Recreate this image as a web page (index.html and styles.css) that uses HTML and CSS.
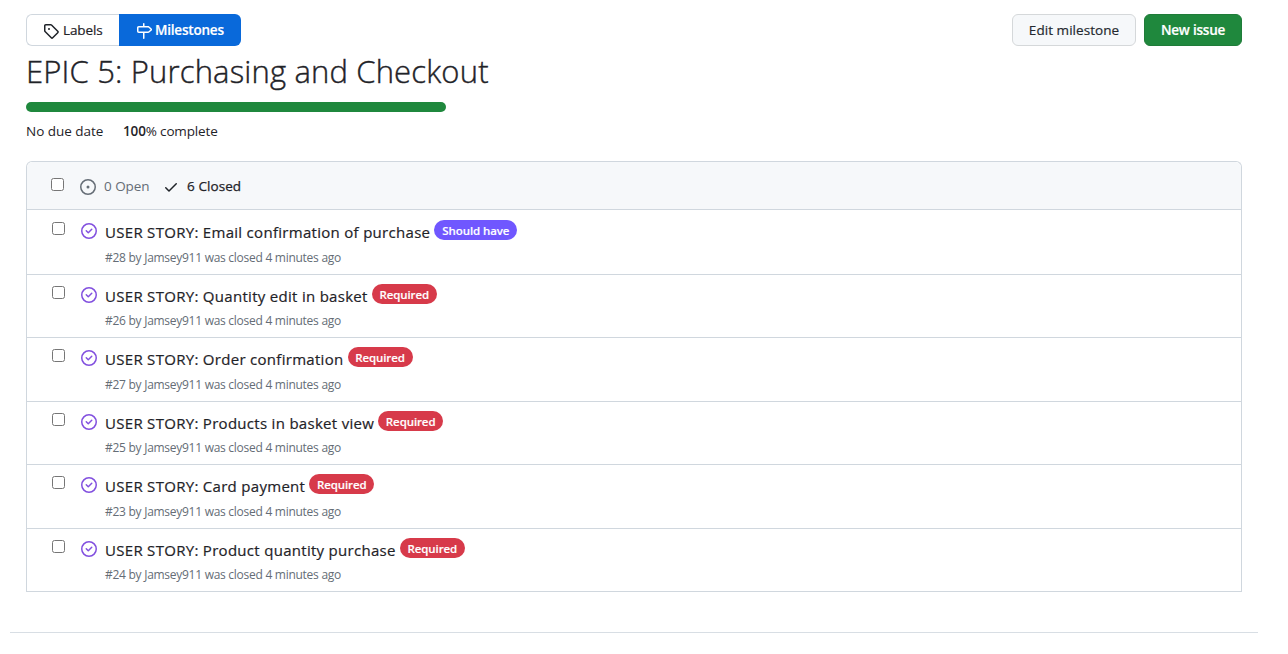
FILE: index.html
```html
<!DOCTYPE html>
<html lang="en">
<head>
<meta charset="utf-8">
<title>EPIC 5: Purchasing and Checkout</title>
<link rel="stylesheet" href="styles.css">
</head>
<body>
<svg class="sprite" width="0" height="0" aria-hidden="true">
  <symbol id="closed" viewBox="0 0 16 16"><path d="M11.28 6.78a.75.75 0 0 0-1.06-1.06L7.25 8.69 5.78 7.22a.75.75 0 0 0-1.06 1.06l2 2a.75.75 0 0 0 1.06 0l3.5-3.5Z"/><path d="M16 8A8 8 0 1 1 0 8a8 8 0 0 1 16 0Zm-1.5 0a6.5 6.5 0 1 0-13 0 6.5 6.5 0 0 0 13 0Z"/></symbol>
</svg>
<main class="page">
  <header class="toolbar">
    <nav class="tabs">
      <a class="tab tab-labels"><svg class="icon" viewBox="0 0 16 16"><path d="M1 7.775V2.75C1 1.784 1.784 1 2.75 1h5.025c.464 0 .91.184 1.238.513l6.25 6.25a1.75 1.75 0 0 1 0 2.474l-5.026 5.026a1.75 1.75 0 0 1-2.474 0l-6.25-6.25A1.752 1.752 0 0 1 1 7.775Zm1.5 0c0 .066.026.13.073.177l6.25 6.25a.25.25 0 0 0 .354 0l5.025-5.025a.25.25 0 0 0 0-.354l-6.25-6.25a.25.25 0 0 0-.177-.073H2.75a.25.25 0 0 0-.25.25ZM6 5a1 1 0 1 1 0 2 1 1 0 0 1 0-2Z"/></svg><span>Labels</span></a>
      <a class="tab tab-milestones"><svg class="icon" viewBox="0 0 16 16"><path d="M7.75 0a.75.75 0 0 1 .75.75V3h3.634c.414 0 .814.147 1.13.414l2.07 1.75a1.75 1.75 0 0 1 0 2.672l-2.07 1.75a1.75 1.75 0 0 1-1.13.414H8.5v5.25a.75.75 0 0 1-1.5 0V10H2.75A1.75 1.75 0 0 1 1 8.25v-3.5C1 3.784 1.784 3 2.75 3H7V.75A.75.75 0 0 1 7.75 0Zm4.384 8.5a.25.25 0 0 0 .161-.06l2.07-1.75a.248.248 0 0 0 0-.38l-2.07-1.75a.25.25 0 0 0-.161-.06H2.75a.25.25 0 0 0-.25.25v3.5c0 .138.112.25.25.25h9.384Z"/></svg><span>Milestones</span></a>
    </nav>
    <div class="actions">
      <button class="btn btn-edit">Edit milestone</button>
      <button class="btn btn-new">New issue</button>
    </div>
  </header>
  <h1 class="title"><span>EPIC 5: Purchasing and Checkout</span></h1>
  <div class="progress"></div>
  <div class="stats"><span class="due">No due date</span><span class="complete"><b>100</b>% complete</span></div>
  <section class="issues">
    <div class="issues-head">
      <input type="checkbox" class="check">
      <svg class="icon head-open-icon" viewBox="0 0 16 16"><path d="M8 9.500a1.500 1.500 0 1 0 0-3 1.500 1.500 0 0 0 0 3Z"/><path d="M8 0a8 8 0 1 1 0 16A8 8 0 0 1 8 0ZM1.500 8a6.500 6.500 0 1 0 13 0 6.500 6.500 0 0 0-13 0Z"/></svg>
      <span class="open">0 Open</span>
      <svg class="icon head-check-icon" viewBox="0 0 16 16"><path d="M13.780 4.220a.75.75 0 0 1 0 1.060l-7.250 7.250a.75.75 0 0 1-1.060 0L2.220 9.280a.751.751 0 0 1 .018-1.042.751.751 0 0 1 1.042-.018L6 10.940l6.720-6.720a.75.75 0 0 1 1.060 0Z"/></svg>
      <span class="closed">6 Closed</span>
    </div>
    <article class="issue issue-first"><input type="checkbox" class="check"><svg class="icon issue-icon"><use href="#closed"/></svg><div class="issue-text"><div class="issue-line"><a class="name">USER STORY: Email confirmation of purchase</a><span class="label should">Should have</span></div><div class="meta">#28 by Jamsey911 was closed 4 minutes ago</div></div></article>
    <article class="issue short"><input type="checkbox" class="check"><svg class="icon issue-icon"><use href="#closed"/></svg><div class="issue-text"><div class="issue-line"><a class="name">USER STORY: Quantity edit in basket</a><span class="label required">Required</span></div><div class="meta">#26 by Jamsey911 was closed 4 minutes ago</div></div></article>
    <article class="issue"><input type="checkbox" class="check"><svg class="icon issue-icon"><use href="#closed"/></svg><div class="issue-text"><div class="issue-line"><a class="name">USER STORY: Order confirmation</a><span class="label required">Required</span></div><div class="meta">#27 by Jamsey911 was closed 4 minutes ago</div></div></article>
    <article class="issue short"><input type="checkbox" class="check"><svg class="icon issue-icon"><use href="#closed"/></svg><div class="issue-text"><div class="issue-line"><a class="name">USER STORY: Products in basket view</a><span class="label required">Required</span></div><div class="meta">#25 by Jamsey911 was closed 4 minutes ago</div></div></article>
    <article class="issue"><input type="checkbox" class="check"><svg class="icon issue-icon"><use href="#closed"/></svg><div class="issue-text"><div class="issue-line"><a class="name">USER STORY: Card payment</a><span class="label required">Required</span></div><div class="meta">#23 by Jamsey911 was closed 4 minutes ago</div></div></article>
    <article class="issue short"><input type="checkbox" class="check"><svg class="icon issue-icon"><use href="#closed"/></svg><div class="issue-text"><div class="issue-line"><a class="name">USER STORY: Product quantity purchase</a><span class="label required">Required</span></div><div class="meta">#24 by Jamsey911 was closed 4 minutes ago</div></div></article>
  </section>
</main>
<hr class="rule">
</body>
</html>
```
FILE: styles.css
```css
* { box-sizing: border-box; }
body { margin: 0; background: #fff; color: #1f2328; font: 14px/20px "Segoe UI", "Open Sans", "Noto Sans", sans-serif; white-space: nowrap; }
.sprite { display: block; }
.page { padding: 14px 46px 0 26px; }
.icon { width: 16px; height: 16px; fill: currentColor; flex: none; }
.toolbar { display: flex; justify-content: space-between; height: 32px; }
.tabs, .actions { display: flex; }
.actions { gap: 8px; }
.tab { display: flex; align-items: center; gap: 4px; height: 32px; font-size: 13.5px; }
.tab .icon { position: relative; top: 1px; }
.tab-labels { width: 93px; padding-left: 16px; border: 1px solid #d0d7de; border-right: 0; border-radius: 6px 0 0 6px; letter-spacing: -.1px; -webkit-text-stroke: .2px; }
.tab-milestones { width: 122px; padding-left: 17px; border-radius: 0 6px 6px 0; background: #0969da; color: #fff; font-weight: 600; letter-spacing: -.2px; -webkit-text-stroke: .2px; }
.btn { height: 32px; padding: 0; border: 1px solid #d5d8da; border-radius: 6px; font: 400 13.5px/20px "Segoe UI", "Open Sans", "Noto Sans", sans-serif; color: #24292f; }
.btn-edit { width: 124px; background: #f6f8fa; letter-spacing: .05px; -webkit-text-stroke: .18px; }
.btn-new { width: 98px; background: #1f883d; border-color: #1f7c39; color: #fff; font-weight: 600; letter-spacing: -.22px; -webkit-text-stroke: .2px; }
.tab-milestones span { margin-left: -1px; }
.title { margin: 5px 0 0; height: 41px; font-size: 31px; line-height: 40px; font-weight: 300; letter-spacing: .16px; -webkit-text-stroke: .4px; }
.progress { width: 420px; height: 10px; margin-top: 10px; border-radius: 5px; background: #1f883d; }
.stats { display: flex; gap: 20px; margin-top: 9px; height: 20px; font-size: 13.5px; letter-spacing: -.15px; }
.due { width: 77px; letter-spacing: -.03px; }
.stats b { font-weight: 600; }
.issues { margin-top: 20px; border: 1px solid #d0d7de; border-bottom: 0; border-radius: 6px 6px 0 0; }
.issues-head { display: flex; align-items: flex-start; height: 48px; padding: 16px 24px 0; background: #f6f8fa; border-bottom: 1px solid #d0d7de; border-radius: 6px 6px 0 0; font-size: 13.5px; line-height: 17px; }
.check { width: 13px; height: 13px; margin: 0; flex: none; }
.head-open-icon { margin: 1px 8px 0 16px; color: #656d76; }
.open { width: 45px; color: #656d76; letter-spacing: -.05px; }
.head-check-icon { margin: 1px 8px 0 14px; }
.closed { letter-spacing: .08px; -webkit-text-stroke: .25px; }
.issue { display: flex; align-items: flex-start; height: 64px; padding: 11px 0 0 25px; border-bottom: 1px solid #d0d7de; }
.issue.short { height: 63px; }
.issue.issue-first { height: 65px; padding-top: 12px; }
.issue-icon { margin: 1px 8px 0 16px; color: #8250df; flex: none; }
.issue-line { display: flex; height: 20px; }
.name { margin-right: 4px; font-size: 15px; line-height: 20px; letter-spacing: .295px; -webkit-text-stroke: .2px; }
.label { height: 20px; margin-top: -2px; border-radius: 10px; color: #fff; font-size: 11.5px; line-height: 21px; font-weight: 600; text-align: center; letter-spacing: -.1px; -webkit-text-stroke: .15px; }
.should { width: 83px; background: #7057ff; }
.required { width: 65px; background: #d73a4a; }
.meta { margin-top: 7px; font-size: 12px; line-height: 18px; color: #656d76; letter-spacing: -.27px; }
.short .meta { margin-top: 6px; }
.rule { margin: 40px 30px 0 10px; border: 0; border-top: 1px solid #d8dee4; }
```
